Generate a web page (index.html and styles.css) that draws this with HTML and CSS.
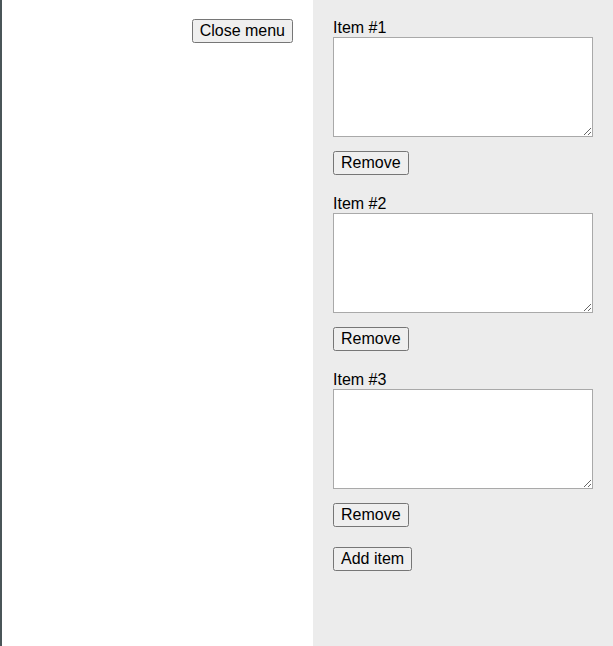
FILE: index.html
```html
<!DOCTYPE html>
<html>
<head>
<meta charset="utf-8">
<link rel="stylesheet" href="styles.css">
</head>
<body>
<div class="layout">
  <div class="main">
    <button class="btn">Close menu</button>
  </div>
  <div class="menu">
    <div class="item">
      <label class="label">Item #1</label>
      <textarea class="field"></textarea>
      <button class="btn">Remove</button>
    </div>
    <div class="item">
      <label class="label">Item #2</label>
      <textarea class="field"></textarea>
      <button class="btn">Remove</button>
    </div>
    <div class="item">
      <label class="label">Item #3</label>
      <textarea class="field"></textarea>
      <button class="btn">Remove</button>
    </div>
    <div class="item">
      <button class="btn">Add item</button>
    </div>
  </div>
</div>
</body>
</html>
```
FILE: styles.css
```css
html, body {
  margin: 0;
  height: 100%;
}
body {
  font-family: "Liberation Sans", Arial, sans-serif;
  font-size: 16px;
  line-height: 18px;
  color: #000;
}
.layout {
  display: flex;
  height: 100%;
  border-left: 2px solid #4a5558;
  box-sizing: border-box;
}
.main {
  flex: 1;
  background: #fff;
  padding: 19px 20px;
  display: flex;
  justify-content: flex-end;
  align-items: flex-start;
}
.menu {
  width: 300px;
  box-sizing: border-box;
  background: #ececec;
  padding: 19px 20px;
  display: flex;
  flex-direction: column;
  gap: 20px;
}
.item {
  display: flex;
  flex-direction: column;
  align-items: flex-start;
}
.label {
  display: block;
  height: 18px;
}
.field {
  display: block;
  width: 260px;
  height: 100px;
  box-sizing: border-box;
  margin: 0 0 14px 0;
  border: 1px solid #a9a9a9;
  padding: 2px;
  background: #fff;
  font: inherit;
}
.btn {
  font-family: "Liberation Sans", Arial, sans-serif;
  font-size: 16px;
  line-height: 18px;
  height: 24px;
  padding: 1px 6px;
  margin: 0;
}
```
